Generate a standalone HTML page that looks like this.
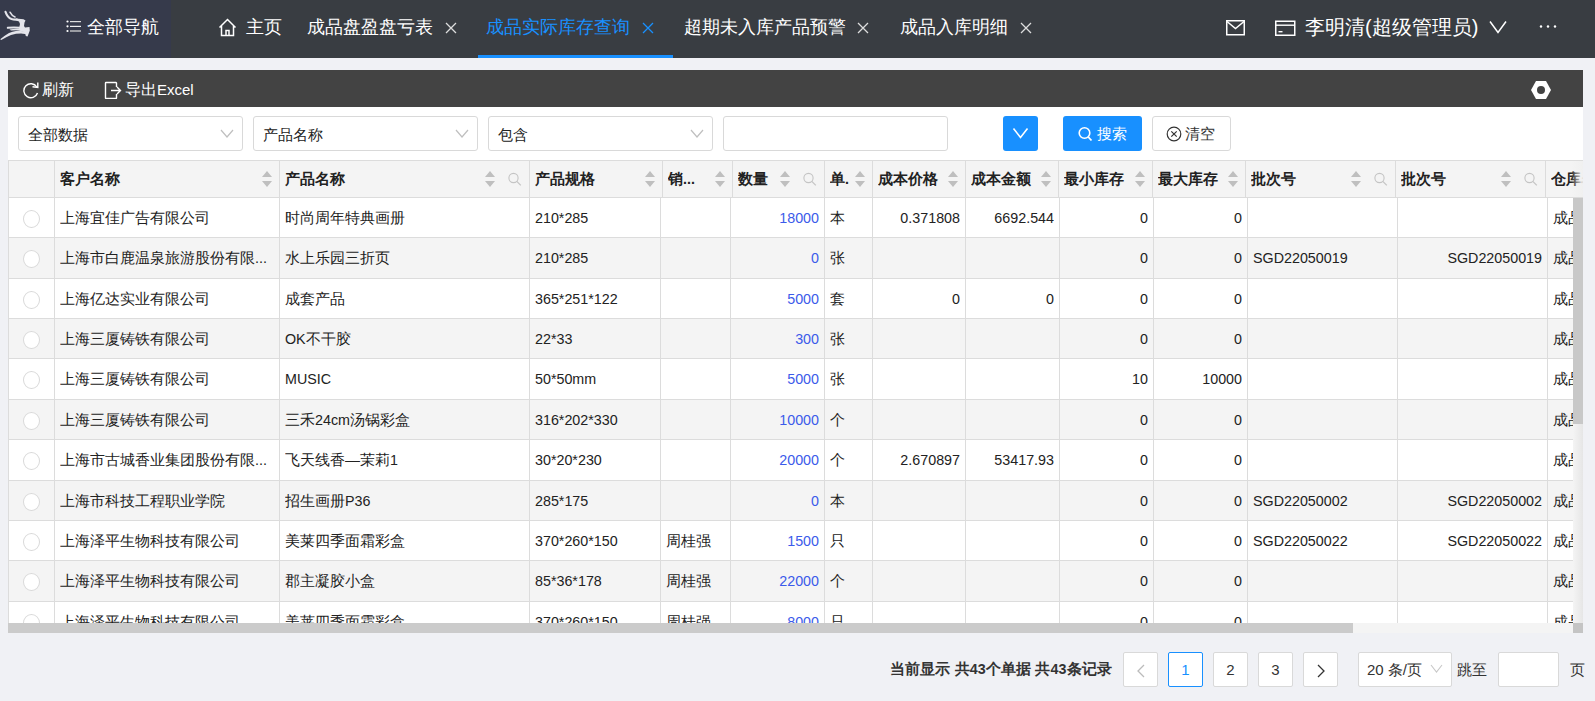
<!DOCTYPE html>
<html><head><meta charset="utf-8">
<style>
*{box-sizing:border-box;margin:0;padding:0}
html,body{width:1595px;height:701px;overflow:hidden}
body{position:relative;background:#f0f1f5;font-family:"Liberation Sans",sans-serif;color:#222;font-size:15px}
.a{position:absolute}
.t{position:absolute;white-space:nowrap;line-height:1}
.nav{position:absolute;left:0;top:0;width:1595px;height:58px;background:#393d42}
.navl{position:absolute;left:0;top:0;width:171px;height:58px;background:#363a4b}
.nt{position:absolute;white-space:nowrap;color:#fff;font-size:18px;line-height:18px;top:18px}
.lat{font-size:14.3px}
.tb{position:absolute;left:8px;top:70px;width:1575px;height:37px;background:#434343}
.panel{position:absolute;left:8px;top:107px;width:1575px;height:526px;background:#fff}
.sel{position:absolute;top:116px;height:35px;border:1px solid #d9d9d9;border-radius:3px;background:#fff}
.sel .tx{position:absolute;left:9px;top:10px;font-size:15px;line-height:15px;color:#222;white-space:nowrap}
.chev{position:absolute;top:12px}
.thead{position:absolute;left:0;top:0}
.hbg{position:absolute;left:8px;top:160px;width:1575px;height:38px;background:#f4f4f4;border-top:1px solid #dcdcdc;border-bottom:1px solid #dcdcdc;border-left:1px solid #dcdcdc}
.vl{position:absolute;width:1px;background:#dcdcdc}
.hl{position:absolute;left:8px;width:1565px;height:1px;background:#dcdcdc}
.tr{position:absolute;left:9px;width:1564px}
.ht{position:absolute;height:36px;line-height:36px;font-weight:bold;font-size:15px;color:#222;white-space:nowrap;overflow:hidden}
.td{position:absolute;white-space:nowrap;overflow:hidden;font-size:15px;color:#222}
.td.r{text-align:right}
.blue{color:#3b5bea}
.radio{position:absolute;width:17px;height:18px;border:1px solid #d9d9d9;border-radius:50%;background:#fff}
.ic{position:absolute}
.clip{position:absolute;left:9px;top:161px;width:1574px;height:462px;overflow:hidden}
.pg{position:absolute;top:652px;width:35px;height:35px;border:1px solid #d9d9d9;border-radius:2px;background:#fff;text-align:center;line-height:33px;font-size:15px;color:#333}
</style></head><body>
<div class="nav"></div>
<div class="navl"></div>
<!-- logo -->
<svg class="a" style="left:0;top:0" width="32" height="50" viewBox="0 0 32 50">
<g fill="none" stroke="#e4e4ea" stroke-linecap="round">
<path d="M5.5 11.8 Q7.5 17.5 11.5 19 Q14 19.8 17 19.5" stroke-width="2.1"/>
<path d="M10 12.2 Q11.8 15.8 15 17" stroke-width="1.5"/>
<path d="M7.8 27.8 Q14 27.2 20 27.8" stroke-width="2"/>
</g>
<path d="M28 31.5 L17 30.8 Q12 31.5 9 33 Q4 36 0.2 39.2 L1.2 40 Q6 37.2 11 35 Q16 33.6 21 33.6 L27 34.2 Z" fill="#e4e4ea"/>
<path d="M16 18.6 L23.5 19.2 L25.5 20.5 L24.5 22.5 L24 26 L25 27.5 L29.5 27 L29.8 30.5 L28.5 34 L27.5 36.5 L25.8 36 L25.2 33.5 L23 31.5 L17 30.2 L11 30.5 L9.5 29.5 L13 29 L19 28.5 L20 24 L19 21.5 L16 20.6 Z" fill="#e4e4ea"/>
</svg>
<!-- list icon -->
<svg class="a" style="left:66px;top:20px" width="16" height="13" viewBox="0 0 16 13">
<circle cx="1.5" cy="1.5" r="1.1" fill="#fff"/><circle cx="1.5" cy="6.3" r="1.1" fill="#fff"/><circle cx="1.5" cy="11" r="1.1" fill="#fff"/>
<rect x="4" y="1" width="11" height="1.2" fill="#ddd"/><rect x="4" y="5.8" width="11" height="1.2" fill="#eee"/><rect x="4" y="10.4" width="11" height="1.2" fill="#ddd"/>
</svg>
<div class="nt" style="left:87px">全部导航</div>
<!-- home -->
<svg class="a" style="left:218px;top:18px" width="19" height="19" viewBox="0 0 19 19">
<path d="M1.5 9.5 L9.5 1.5 L17.5 9.5 M3.5 8 V17.5 H15.5 V8 M8 17.5 V12.5 H11 V17.5" fill="none" stroke="#fff" stroke-width="1.5" stroke-linejoin="miter"/>
</svg>
<div class="nt" style="left:246px">主页</div>
<div class="nt" style="left:307px">成品盘盈盘亏表</div>
<svg class="a" style="left:445px;top:22px" width="12" height="12" viewBox="0 0 12 12"><path d="M1 1L11 11M11 1L1 11" stroke="#ddd" stroke-width="1.3"/></svg>
<div class="nt" style="left:486px;color:#1890ff">成品实际库存查询</div>
<svg class="a" style="left:642px;top:22px" width="12" height="12" viewBox="0 0 12 12"><path d="M1 1L11 11M11 1L1 11" stroke="#1890ff" stroke-width="1.3"/></svg>
<div class="a" style="left:478px;top:55px;width:195px;height:3px;background:#1890ff"></div>
<div class="nt" style="left:684px">超期未入库产品预警</div>
<svg class="a" style="left:857px;top:22px" width="12" height="12" viewBox="0 0 12 12"><path d="M1 1L11 11M11 1L1 11" stroke="#ddd" stroke-width="1.3"/></svg>
<div class="nt" style="left:900px">成品入库明细</div>
<svg class="a" style="left:1020px;top:22px" width="12" height="12" viewBox="0 0 12 12"><path d="M1 1L11 11M11 1L1 11" stroke="#ddd" stroke-width="1.3"/></svg>
<!-- mail -->
<svg class="a" style="left:1226px;top:20px" width="20" height="16" viewBox="0 0 20 16">
<rect x="0.75" y="0.75" width="17.5" height="14" fill="none" stroke="#fff" stroke-width="1.5"/>
<path d="M1 1.5 L9.5 8.5 L18 1.5" fill="none" stroke="#fff" stroke-width="1.5"/>
</svg>
<!-- card -->
<svg class="a" style="left:1275px;top:20px" width="21" height="16" viewBox="0 0 21 16">
<rect x="0.75" y="1.25" width="19" height="14" fill="none" stroke="#fff" stroke-width="1.5"/>
<rect x="1" y="4.5" width="18.5" height="1.4" fill="#fff"/>
<rect x="3.5" y="11" width="4" height="1.4" fill="#fff"/>
</svg>
<div class="nt" style="left:1305px;font-size:20px;line-height:20px;top:17px">李明清(超级管理员)</div>
<svg class="a" style="left:1489px;top:20px" width="18" height="14" viewBox="0 0 18 14"><path d="M1 1.5 L9 12.5 L17 1.5" fill="none" stroke="#fff" stroke-width="1.5"/></svg>
<svg class="a" style="left:1539px;top:24px" width="18" height="5" viewBox="0 0 18 5"><circle cx="2" cy="2.5" r="1.2" fill="#fff"/><circle cx="9" cy="2.5" r="1.2" fill="#fff"/><circle cx="16" cy="2.5" r="1.2" fill="#fff"/></svg>

<!-- toolbar -->
<div class="tb"></div>
<svg class="a" style="left:22px;top:81px" width="18" height="18" viewBox="0 0 18 18">
<path d="M14.8 6 A7 7 0 1 0 15.5 12" fill="none" stroke="#fff" stroke-width="1.4"/>
<path d="M10.5 5.8 L15.8 6.5 L15.8 1.5" fill="none" stroke="#fff" stroke-width="1.4"/>
</svg>
<div class="t" style="left:42px;top:82px;font-size:16px;color:#fff">刷新</div>
<svg class="a" style="left:103px;top:81px" width="19" height="18" viewBox="0 0 19 18">
<path d="M13.5 6 V2 Q13.5 1.5 13 1.5 H3 Q2.5 1.5 2.5 2 V17 Q2.5 17.5 3 17.5 H13 Q13.5 17.5 13.5 17 V13" fill="none" stroke="#fff" stroke-width="1.4"/>
<path d="M8 9.5 H17.5 M14 6 L17.5 9.5 L14 13" fill="none" stroke="#fff" stroke-width="1.4"/>
</svg>
<div class="t" style="left:125px;top:82px;font-size:16px;color:#fff">导出<span style="font-size:15px">Excel</span></div>
<svg class="a" style="left:1530px;top:80px" width="22" height="20" viewBox="0 0 22 20">
<path d="M6 1 H16 L21 10 L16 19 H6 L1 10 Z" fill="#fff"/><circle cx="11" cy="10" r="4" fill="#434343"/>
</svg>

<div class="panel"></div>
<!-- filter row -->
<div class="sel" style="left:18px;width:225px"><div class="tx">全部数据</div>
<svg class="chev" style="left:201px" width="14" height="9" viewBox="0 0 14 9"><path d="M1 1 L7 8 L13 1" fill="none" stroke="#bfbfbf" stroke-width="1.2"/></svg></div>
<div class="sel" style="left:253px;width:225px"><div class="tx">产品名称</div>
<svg class="chev" style="left:201px" width="14" height="9" viewBox="0 0 14 9"><path d="M1 1 L7 8 L13 1" fill="none" stroke="#bfbfbf" stroke-width="1.2"/></svg></div>
<div class="sel" style="left:488px;width:225px"><div class="tx">包含</div>
<svg class="chev" style="left:201px" width="14" height="9" viewBox="0 0 14 9"><path d="M1 1 L7 8 L13 1" fill="none" stroke="#bfbfbf" stroke-width="1.2"/></svg></div>
<div class="sel" style="left:723px;width:225px"></div>
<div class="a" style="left:1003px;top:116px;width:35px;height:35px;background:#1890ff;border-radius:3px"></div>
<svg class="a" style="left:1012px;top:127px" width="17" height="12" viewBox="0 0 17 12"><path d="M1.5 1.5 L8.5 10.5 L15.5 1.5" fill="none" stroke="#fff" stroke-width="1.6"/></svg>
<div class="a" style="left:1063px;top:116px;width:79px;height:35px;background:#1890ff;border-radius:3px"></div>
<svg class="a" style="left:1078px;top:126px" width="15" height="16" viewBox="0 0 15 16"><circle cx="6.5" cy="7" r="5.3" fill="none" stroke="#fff" stroke-width="1.6"/><path d="M10.3 11 L13.5 14.5" stroke="#fff" stroke-width="1.8"/></svg>
<div class="t" style="left:1097px;top:126px;font-size:15px;color:#fff">搜索</div>
<div class="sel" style="left:1152px;width:79px"></div>
<svg class="a" style="left:1166px;top:126px" width="16" height="16" viewBox="0 0 16 16"><circle cx="8" cy="8" r="6.8" fill="none" stroke="#333" stroke-width="1.2"/><path d="M5.3 5.3 L10.7 10.7 M10.7 5.3 L5.3 10.7" stroke="#333" stroke-width="1.2"/></svg>
<div class="t" style="left:1185px;top:126px;font-size:15px;color:#333">清空</div>

<!-- table -->
<div class="hbg"></div>
<div class="a" style="left:8px;top:160px;width:1px;height:473px;background:#dcdcdc"></div>
<div class="clip"><div style="position:absolute;left:-9px;top:-161px;width:1700px;height:700px">
<div class="thead"><div class="vl" style="left:54px;top:161px;height:36px"></div><div class="vl" style="left:279px;top:161px;height:36px"></div><div class="vl" style="left:529px;top:161px;height:36px"></div><div class="vl" style="left:662px;top:161px;height:36px"></div><div class="vl" style="left:732px;top:161px;height:36px"></div><div class="vl" style="left:824px;top:161px;height:36px"></div><div class="vl" style="left:872px;top:161px;height:36px"></div><div class="vl" style="left:965px;top:161px;height:36px"></div><div class="vl" style="left:1058px;top:161px;height:36px"></div><div class="vl" style="left:1152px;top:161px;height:36px"></div><div class="vl" style="left:1245px;top:161px;height:36px"></div><div class="vl" style="left:1395px;top:161px;height:36px"></div><div class="vl" style="left:1545px;top:161px;height:36px"></div><div class="ht" style="left:60px;top:161px;width:205px">客户名称</div><svg class="ic" style="left:262px;top:171px" width="10" height="16" viewBox="0 0 10 16"><path d="M0 6L5 0L10 6Z M0 10L10 10L5 16Z" fill="#bfbfbf"/></svg><div class="ht" style="left:285px;top:161px;width:230px">产品名称</div><svg class="ic" style="left:485px;top:171px" width="10" height="16" viewBox="0 0 10 16"><path d="M0 6L5 0L10 6Z M0 10L10 10L5 16Z" fill="#bfbfbf"/></svg><svg class="ic" style="left:508px;top:172px" width="14" height="15" viewBox="0 0 14 15"><circle cx="5.5" cy="6" r="4.6" fill="none" stroke="#c4c4c4" stroke-width="1.1"/><path d="M8.8 9.3L12.8 13.3" stroke="#c4c4c4" stroke-width="1.2"/></svg><div class="ht" style="left:535px;top:161px;width:113px">产品规格</div><svg class="ic" style="left:645px;top:171px" width="10" height="16" viewBox="0 0 10 16"><path d="M0 6L5 0L10 6Z M0 10L10 10L5 16Z" fill="#bfbfbf"/></svg><div class="ht" style="left:668px;top:161px;width:50px">销<span class="lat">...</span></div><svg class="ic" style="left:715px;top:171px" width="10" height="16" viewBox="0 0 10 16"><path d="M0 6L5 0L10 6Z M0 10L10 10L5 16Z" fill="#bfbfbf"/></svg><div class="ht" style="left:738px;top:161px;width:72px">数量</div><svg class="ic" style="left:780px;top:171px" width="10" height="16" viewBox="0 0 10 16"><path d="M0 6L5 0L10 6Z M0 10L10 10L5 16Z" fill="#bfbfbf"/></svg><svg class="ic" style="left:803px;top:172px" width="14" height="15" viewBox="0 0 14 15"><circle cx="5.5" cy="6" r="4.6" fill="none" stroke="#c4c4c4" stroke-width="1.1"/><path d="M8.8 9.3L12.8 13.3" stroke="#c4c4c4" stroke-width="1.2"/></svg><div class="ht" style="left:830px;top:161px;width:28px">单<span class="lat">.</span></div><svg class="ic" style="left:855px;top:171px" width="10" height="16" viewBox="0 0 10 16"><path d="M0 6L5 0L10 6Z M0 10L10 10L5 16Z" fill="#bfbfbf"/></svg><div class="ht" style="left:878px;top:161px;width:73px">成本价格</div><svg class="ic" style="left:948px;top:171px" width="10" height="16" viewBox="0 0 10 16"><path d="M0 6L5 0L10 6Z M0 10L10 10L5 16Z" fill="#bfbfbf"/></svg><div class="ht" style="left:971px;top:161px;width:73px">成本金额</div><svg class="ic" style="left:1041px;top:171px" width="10" height="16" viewBox="0 0 10 16"><path d="M0 6L5 0L10 6Z M0 10L10 10L5 16Z" fill="#bfbfbf"/></svg><div class="ht" style="left:1064px;top:161px;width:74px">最小库存</div><svg class="ic" style="left:1135px;top:171px" width="10" height="16" viewBox="0 0 10 16"><path d="M0 6L5 0L10 6Z M0 10L10 10L5 16Z" fill="#bfbfbf"/></svg><div class="ht" style="left:1158px;top:161px;width:73px">最大库存</div><svg class="ic" style="left:1228px;top:171px" width="10" height="16" viewBox="0 0 10 16"><path d="M0 6L5 0L10 6Z M0 10L10 10L5 16Z" fill="#bfbfbf"/></svg><div class="ht" style="left:1251px;top:161px;width:130px">批次号</div><svg class="ic" style="left:1351px;top:171px" width="10" height="16" viewBox="0 0 10 16"><path d="M0 6L5 0L10 6Z M0 10L10 10L5 16Z" fill="#bfbfbf"/></svg><svg class="ic" style="left:1374px;top:172px" width="14" height="15" viewBox="0 0 14 15"><circle cx="5.5" cy="6" r="4.6" fill="none" stroke="#c4c4c4" stroke-width="1.1"/><path d="M8.8 9.3L12.8 13.3" stroke="#c4c4c4" stroke-width="1.2"/></svg><div class="ht" style="left:1401px;top:161px;width:130px">批次号</div><svg class="ic" style="left:1501px;top:171px" width="10" height="16" viewBox="0 0 10 16"><path d="M0 6L5 0L10 6Z M0 10L10 10L5 16Z" fill="#bfbfbf"/></svg><svg class="ic" style="left:1524px;top:172px" width="14" height="15" viewBox="0 0 14 15"><circle cx="5.5" cy="6" r="4.6" fill="none" stroke="#c4c4c4" stroke-width="1.1"/><path d="M8.8 9.3L12.8 13.3" stroke="#c4c4c4" stroke-width="1.2"/></svg><div class="ht" style="left:1551px;top:161px;width:135px">仓库名称</div></div>
<div class="tr" style="top:198px;height:39px;background:#fff"></div><div class="hl" style="top:237px"></div><div class="radio" style="left:23px;top:210px"></div><div class="td" style="left:60px;width:218px;top:198px;height:39px;line-height:39px">上海宜佳广告有限公司</div><div class="td" style="left:285px;width:243px;top:198px;height:39px;line-height:39px">时尚周年特典画册</div><div class="td" style="left:535px;width:124px;top:198px;height:39px;line-height:39px"><span class="lat">210*285</span></div><div class="td r blue" style="left:731px;width:88px;top:198px;height:39px;line-height:39px"><span class="lat">18000</span></div><div class="td" style="left:830px;width:41px;top:198px;height:39px;line-height:39px">本</div><div class="td r" style="left:873px;width:87px;top:198px;height:39px;line-height:39px"><span class="lat">0.371808</span></div><div class="td r" style="left:966px;width:88px;top:198px;height:39px;line-height:39px"><span class="lat">6692.544</span></div><div class="td r" style="left:1060px;width:88px;top:198px;height:39px;line-height:39px"><span class="lat">0</span></div><div class="td r" style="left:1154px;width:88px;top:198px;height:39px;line-height:39px"><span class="lat">0</span></div><div class="td" style="left:1553px;width:146px;top:198px;height:39px;line-height:39px">成品</div><div class="tr" style="top:238px;height:40px;background:#f4f4f4"></div><div class="hl" style="top:278px"></div><div class="radio" style="left:23px;top:250px"></div><div class="td" style="left:60px;width:218px;top:238px;height:40px;line-height:40px">上海市白鹿温泉旅游股份有限<span class="lat">...</span></div><div class="td" style="left:285px;width:243px;top:238px;height:40px;line-height:40px">水上乐园三折页</div><div class="td" style="left:535px;width:124px;top:238px;height:40px;line-height:40px"><span class="lat">210*285</span></div><div class="td r blue" style="left:731px;width:88px;top:238px;height:40px;line-height:40px"><span class="lat">0</span></div><div class="td" style="left:830px;width:41px;top:238px;height:40px;line-height:40px">张</div><div class="td r" style="left:1060px;width:88px;top:238px;height:40px;line-height:40px"><span class="lat">0</span></div><div class="td r" style="left:1154px;width:88px;top:238px;height:40px;line-height:40px"><span class="lat">0</span></div><div class="td" style="left:1253px;width:143px;top:238px;height:40px;line-height:40px"><span class="lat">SGD22050019</span></div><div class="td r" style="left:1398px;width:144px;top:238px;height:40px;line-height:40px"><span class="lat">SGD22050019</span></div><div class="td" style="left:1553px;width:146px;top:238px;height:40px;line-height:40px">成品</div><div class="tr" style="top:279px;height:39px;background:#fff"></div><div class="hl" style="top:318px"></div><div class="radio" style="left:23px;top:291px"></div><div class="td" style="left:60px;width:218px;top:279px;height:39px;line-height:39px">上海亿达实业有限公司</div><div class="td" style="left:285px;width:243px;top:279px;height:39px;line-height:39px">成套产品</div><div class="td" style="left:535px;width:124px;top:279px;height:39px;line-height:39px"><span class="lat">365*251*122</span></div><div class="td r blue" style="left:731px;width:88px;top:279px;height:39px;line-height:39px"><span class="lat">5000</span></div><div class="td" style="left:830px;width:41px;top:279px;height:39px;line-height:39px">套</div><div class="td r" style="left:873px;width:87px;top:279px;height:39px;line-height:39px"><span class="lat">0</span></div><div class="td r" style="left:966px;width:88px;top:279px;height:39px;line-height:39px"><span class="lat">0</span></div><div class="td r" style="left:1060px;width:88px;top:279px;height:39px;line-height:39px"><span class="lat">0</span></div><div class="td r" style="left:1154px;width:88px;top:279px;height:39px;line-height:39px"><span class="lat">0</span></div><div class="td" style="left:1553px;width:146px;top:279px;height:39px;line-height:39px">成品</div><div class="tr" style="top:319px;height:39px;background:#f4f4f4"></div><div class="hl" style="top:358px"></div><div class="radio" style="left:23px;top:331px"></div><div class="td" style="left:60px;width:218px;top:319px;height:39px;line-height:39px">上海三厦铸铁有限公司</div><div class="td" style="left:285px;width:243px;top:319px;height:39px;line-height:39px"><span class="lat">OK</span>不干胶</div><div class="td" style="left:535px;width:124px;top:319px;height:39px;line-height:39px"><span class="lat">22*33</span></div><div class="td r blue" style="left:731px;width:88px;top:319px;height:39px;line-height:39px"><span class="lat">300</span></div><div class="td" style="left:830px;width:41px;top:319px;height:39px;line-height:39px">张</div><div class="td r" style="left:1060px;width:88px;top:319px;height:39px;line-height:39px"><span class="lat">0</span></div><div class="td r" style="left:1154px;width:88px;top:319px;height:39px;line-height:39px"><span class="lat">0</span></div><div class="td" style="left:1553px;width:146px;top:319px;height:39px;line-height:39px">成品</div><div class="tr" style="top:359px;height:40px;background:#fff"></div><div class="hl" style="top:399px"></div><div class="radio" style="left:23px;top:371px"></div><div class="td" style="left:60px;width:218px;top:359px;height:40px;line-height:40px">上海三厦铸铁有限公司</div><div class="td" style="left:285px;width:243px;top:359px;height:40px;line-height:40px"><span class="lat">MUSIC</span></div><div class="td" style="left:535px;width:124px;top:359px;height:40px;line-height:40px"><span class="lat">50*50mm</span></div><div class="td r blue" style="left:731px;width:88px;top:359px;height:40px;line-height:40px"><span class="lat">5000</span></div><div class="td" style="left:830px;width:41px;top:359px;height:40px;line-height:40px">张</div><div class="td r" style="left:1060px;width:88px;top:359px;height:40px;line-height:40px"><span class="lat">10</span></div><div class="td r" style="left:1154px;width:88px;top:359px;height:40px;line-height:40px"><span class="lat">10000</span></div><div class="td" style="left:1553px;width:146px;top:359px;height:40px;line-height:40px">成品</div><div class="tr" style="top:400px;height:39px;background:#f4f4f4"></div><div class="hl" style="top:439px"></div><div class="radio" style="left:23px;top:412px"></div><div class="td" style="left:60px;width:218px;top:400px;height:39px;line-height:39px">上海三厦铸铁有限公司</div><div class="td" style="left:285px;width:243px;top:400px;height:39px;line-height:39px">三禾<span class="lat">24cm</span>汤锅彩盒</div><div class="td" style="left:535px;width:124px;top:400px;height:39px;line-height:39px"><span class="lat">316*202*330</span></div><div class="td r blue" style="left:731px;width:88px;top:400px;height:39px;line-height:39px"><span class="lat">10000</span></div><div class="td" style="left:830px;width:41px;top:400px;height:39px;line-height:39px">个</div><div class="td r" style="left:1060px;width:88px;top:400px;height:39px;line-height:39px"><span class="lat">0</span></div><div class="td r" style="left:1154px;width:88px;top:400px;height:39px;line-height:39px"><span class="lat">0</span></div><div class="td" style="left:1553px;width:146px;top:400px;height:39px;line-height:39px">成品</div><div class="tr" style="top:440px;height:40px;background:#fff"></div><div class="hl" style="top:480px"></div><div class="radio" style="left:23px;top:452px"></div><div class="td" style="left:60px;width:218px;top:440px;height:40px;line-height:40px">上海市古城香业集团股份有限<span class="lat">...</span></div><div class="td" style="left:285px;width:243px;top:440px;height:40px;line-height:40px">飞天线香—茉莉<span class="lat">1</span></div><div class="td" style="left:535px;width:124px;top:440px;height:40px;line-height:40px"><span class="lat">30*20*230</span></div><div class="td r blue" style="left:731px;width:88px;top:440px;height:40px;line-height:40px"><span class="lat">20000</span></div><div class="td" style="left:830px;width:41px;top:440px;height:40px;line-height:40px">个</div><div class="td r" style="left:873px;width:87px;top:440px;height:40px;line-height:40px"><span class="lat">2.670897</span></div><div class="td r" style="left:966px;width:88px;top:440px;height:40px;line-height:40px"><span class="lat">53417.93</span></div><div class="td r" style="left:1060px;width:88px;top:440px;height:40px;line-height:40px"><span class="lat">0</span></div><div class="td r" style="left:1154px;width:88px;top:440px;height:40px;line-height:40px"><span class="lat">0</span></div><div class="td" style="left:1553px;width:146px;top:440px;height:40px;line-height:40px">成品</div><div class="tr" style="top:481px;height:39px;background:#f4f4f4"></div><div class="hl" style="top:520px"></div><div class="radio" style="left:23px;top:493px"></div><div class="td" style="left:60px;width:218px;top:481px;height:39px;line-height:39px">上海市科技工程职业学院</div><div class="td" style="left:285px;width:243px;top:481px;height:39px;line-height:39px">招生画册<span class="lat">P36</span></div><div class="td" style="left:535px;width:124px;top:481px;height:39px;line-height:39px"><span class="lat">285*175</span></div><div class="td r blue" style="left:731px;width:88px;top:481px;height:39px;line-height:39px"><span class="lat">0</span></div><div class="td" style="left:830px;width:41px;top:481px;height:39px;line-height:39px">本</div><div class="td r" style="left:1060px;width:88px;top:481px;height:39px;line-height:39px"><span class="lat">0</span></div><div class="td r" style="left:1154px;width:88px;top:481px;height:39px;line-height:39px"><span class="lat">0</span></div><div class="td" style="left:1253px;width:143px;top:481px;height:39px;line-height:39px"><span class="lat">SGD22050002</span></div><div class="td r" style="left:1398px;width:144px;top:481px;height:39px;line-height:39px"><span class="lat">SGD22050002</span></div><div class="td" style="left:1553px;width:146px;top:481px;height:39px;line-height:39px">成品</div><div class="tr" style="top:521px;height:39px;background:#fff"></div><div class="hl" style="top:560px"></div><div class="radio" style="left:23px;top:533px"></div><div class="td" style="left:60px;width:218px;top:521px;height:39px;line-height:39px">上海泽平生物科技有限公司</div><div class="td" style="left:285px;width:243px;top:521px;height:39px;line-height:39px">美莱四季面霜彩盒</div><div class="td" style="left:535px;width:124px;top:521px;height:39px;line-height:39px"><span class="lat">370*260*150</span></div><div class="td" style="left:666px;width:63px;top:521px;height:39px;line-height:39px">周桂强</div><div class="td r blue" style="left:731px;width:88px;top:521px;height:39px;line-height:39px"><span class="lat">1500</span></div><div class="td" style="left:830px;width:41px;top:521px;height:39px;line-height:39px">只</div><div class="td r" style="left:1060px;width:88px;top:521px;height:39px;line-height:39px"><span class="lat">0</span></div><div class="td r" style="left:1154px;width:88px;top:521px;height:39px;line-height:39px"><span class="lat">0</span></div><div class="td" style="left:1253px;width:143px;top:521px;height:39px;line-height:39px"><span class="lat">SGD22050022</span></div><div class="td r" style="left:1398px;width:144px;top:521px;height:39px;line-height:39px"><span class="lat">SGD22050022</span></div><div class="td" style="left:1553px;width:146px;top:521px;height:39px;line-height:39px">成品</div><div class="tr" style="top:561px;height:40px;background:#f4f4f4"></div><div class="hl" style="top:601px"></div><div class="radio" style="left:23px;top:573px"></div><div class="td" style="left:60px;width:218px;top:561px;height:40px;line-height:40px">上海泽平生物科技有限公司</div><div class="td" style="left:285px;width:243px;top:561px;height:40px;line-height:40px">郡主凝胶小盒</div><div class="td" style="left:535px;width:124px;top:561px;height:40px;line-height:40px"><span class="lat">85*36*178</span></div><div class="td" style="left:666px;width:63px;top:561px;height:40px;line-height:40px">周桂强</div><div class="td r blue" style="left:731px;width:88px;top:561px;height:40px;line-height:40px"><span class="lat">22000</span></div><div class="td" style="left:830px;width:41px;top:561px;height:40px;line-height:40px">个</div><div class="td r" style="left:1060px;width:88px;top:561px;height:40px;line-height:40px"><span class="lat">0</span></div><div class="td r" style="left:1154px;width:88px;top:561px;height:40px;line-height:40px"><span class="lat">0</span></div><div class="td" style="left:1553px;width:146px;top:561px;height:40px;line-height:40px">成品</div><div class="tr" style="top:602px;height:39px;background:#fff"></div><div class="hl" style="top:641px"></div><div class="radio" style="left:23px;top:614px"></div><div class="td" style="left:60px;width:218px;top:602px;height:39px;line-height:39px">上海泽平生物科技有限公司</div><div class="td" style="left:285px;width:243px;top:602px;height:39px;line-height:39px">美莱四季面霜彩盒</div><div class="td" style="left:535px;width:124px;top:602px;height:39px;line-height:39px"><span class="lat">370*260*150</span></div><div class="td" style="left:666px;width:63px;top:602px;height:39px;line-height:39px">周桂强</div><div class="td r blue" style="left:731px;width:88px;top:602px;height:39px;line-height:39px"><span class="lat">8000</span></div><div class="td" style="left:830px;width:41px;top:602px;height:39px;line-height:39px">只</div><div class="td r" style="left:1060px;width:88px;top:602px;height:39px;line-height:39px"><span class="lat">0</span></div><div class="td r" style="left:1154px;width:88px;top:602px;height:39px;line-height:39px"><span class="lat">0</span></div><div class="td" style="left:1553px;width:146px;top:602px;height:39px;line-height:39px">成品</div><div class="vl" style="left:54px;top:198px;height:425px"></div><div class="vl" style="left:279px;top:198px;height:425px"></div><div class="vl" style="left:529px;top:198px;height:425px"></div><div class="vl" style="left:660px;top:198px;height:425px"></div><div class="vl" style="left:730px;top:198px;height:425px"></div><div class="vl" style="left:824px;top:198px;height:425px"></div><div class="vl" style="left:872px;top:198px;height:425px"></div><div class="vl" style="left:965px;top:198px;height:425px"></div><div class="vl" style="left:1059px;top:198px;height:425px"></div><div class="vl" style="left:1153px;top:198px;height:425px"></div><div class="vl" style="left:1247px;top:198px;height:425px"></div><div class="vl" style="left:1397px;top:198px;height:425px"></div><div class="vl" style="left:1547px;top:198px;height:425px"></div>
</div></div>
<!-- scrollbars -->
<div class="a" style="left:1571px;top:161px;width:12px;height:36px;background:linear-gradient(90deg,rgba(244,244,244,0),rgba(240,240,240,0.95))"></div>
<div class="a" style="left:1573px;top:198px;width:10px;height:425px;background:linear-gradient(90deg,#f4f4f4,#e6e6e6)"></div>
<div class="a" style="left:1573px;top:198px;width:10px;height:226px;background:#c8c8c8"></div>
<div class="a" style="left:8px;top:623px;width:1565px;height:10px;background:#f4f4f4"></div>
<div class="a" style="left:8px;top:623px;width:1345px;height:10px;background:#cbcbcb"></div>
<div class="a" style="left:1573px;top:623px;width:10px;height:10px;background:#c4c4c4"></div>

<!-- pagination -->
<div class="t" style="left:890px;top:661px;font-size:15px;font-weight:bold;letter-spacing:0.1px;color:#333">当前显示 共<span class="lat">43</span>个单据 共<span class="lat">43</span>条记录</div>
<div class="pg" style="left:1123px"><svg style="position:absolute;left:12px;top:11px" width="10" height="14" viewBox="0 0 10 14"><path d="M8 1 L2 7 L8 13" fill="none" stroke="#bbb" stroke-width="1.3"/></svg></div>
<div class="pg" style="left:1168px;border-color:#1890ff;color:#1890ff">1</div>
<div class="pg" style="left:1213px">2</div>
<div class="pg" style="left:1258px">3</div>
<div class="pg" style="left:1303px"><svg style="position:absolute;left:12px;top:11px" width="10" height="14" viewBox="0 0 10 14"><path d="M2 1 L8 7 L2 13" fill="none" stroke="#333" stroke-width="1.3"/></svg></div>
<div class="a" style="left:1358px;top:652px;width:94px;height:35px;border:1px solid #d9d9d9;border-radius:2px;background:#fff"></div>
<div class="t" style="left:1367px;top:662px;font-size:15px;color:#333">20 条/页</div>
<svg class="a" style="left:1430px;top:664px" width="13" height="9" viewBox="0 0 13 9"><path d="M1 1 L6.5 8 L12 1" fill="none" stroke="#c8c8c8" stroke-width="1.1"/></svg>
<div class="t" style="left:1457px;top:662px;font-size:15px;color:#333">跳至</div>
<div class="a" style="left:1498px;top:652px;width:61px;height:35px;border:1px solid #d9d9d9;border-radius:2px;background:#fff"></div>
<div class="t" style="left:1570px;top:662px;font-size:15px;color:#333">页</div>
</body></html>
